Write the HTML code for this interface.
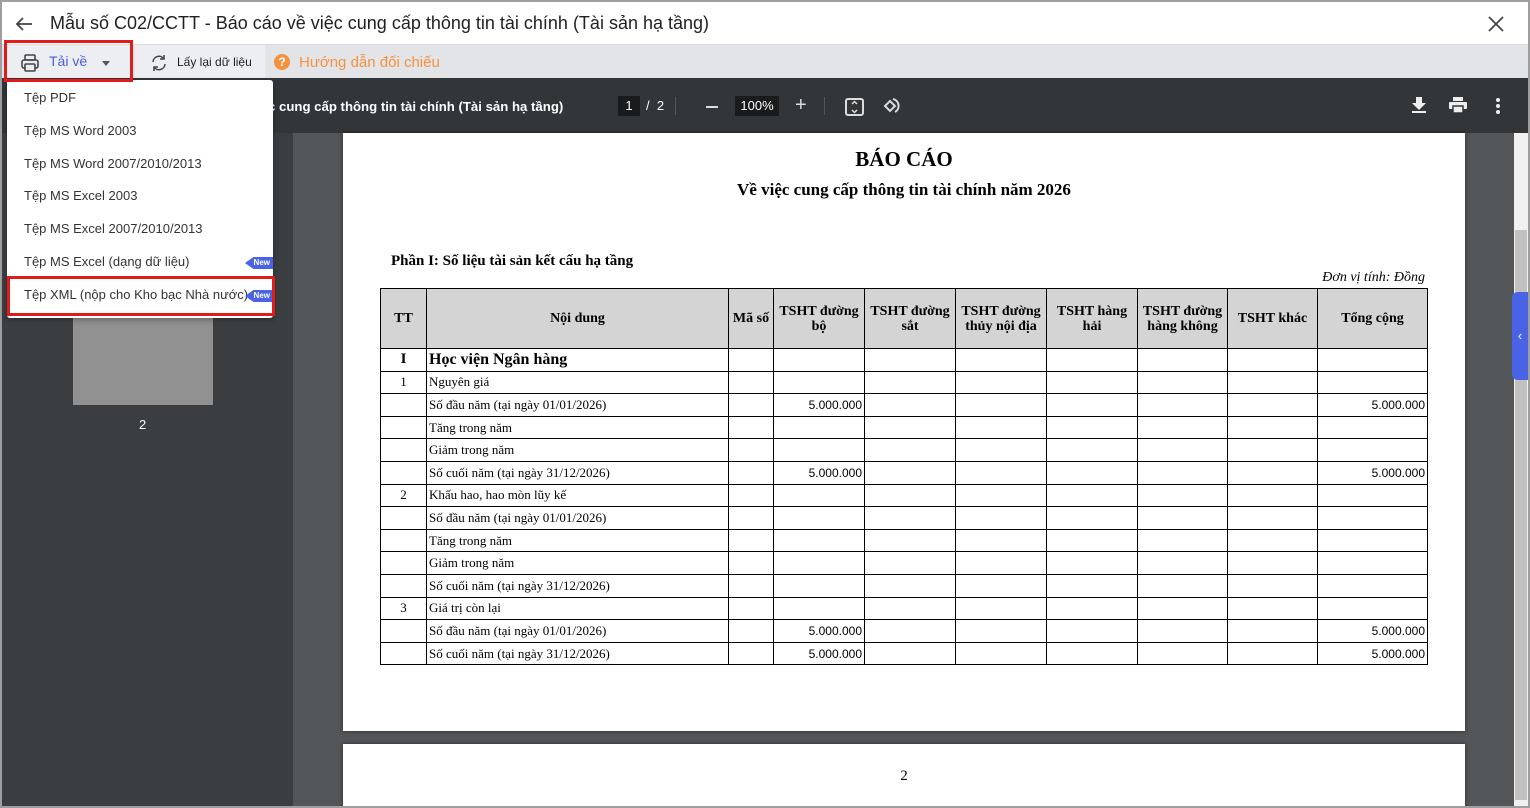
<!DOCTYPE html>
<html><head><meta charset="utf-8">
<style>
*{box-sizing:border-box;margin:0;padding:0}
body{width:1530px;height:808px;overflow:hidden;background:#9e9e9e;font-family:"Liberation Sans",sans-serif;position:relative}
.win{position:absolute;left:2px;top:2px;width:1526px;height:804px;background:#fff;overflow:hidden}
.title{position:absolute;left:0;top:0;width:100%;height:43px;background:#fff;border-bottom:1px solid #ddd}
.title .t{position:absolute;left:48px;top:11px;font-size:18px;color:#212121}
.tb{position:absolute;left:0;top:43px;width:100%;height:34px;background:#e2e4e8}
.btn{position:absolute;top:0;height:34px;background:#eceef1}
.vt{position:absolute;left:0;top:76px;width:100%;height:55px;background:#323639}
.vb{position:absolute;left:0;top:131px;width:1512px;height:673px;background:#525659}
.side{position:absolute;left:0;top:131px;width:291px;height:673px;background:#3b3e41}
.page{position:absolute;left:341px;width:1122px;background:#fff;box-shadow:0 0 4px rgba(0,0,0,.5)}
.menu{position:absolute;left:5px;top:78px;width:266px;height:238px;background:#fff;border-radius:3px;box-shadow:0 2px 6px rgba(0,0,0,.3)}
.menu div{position:absolute;left:17px;font-size:13px;color:#333}
.new{position:absolute;right:0;width:28px;height:12px;background:#4a63e6;color:#fff;font-size:8px;font-weight:bold;line-height:12px;text-align:right;padding-right:3px;clip-path:polygon(0 50%,30% 0,100% 0,100% 100%,30% 100%)}
table{position:absolute;left:37px;top:155px;border-collapse:collapse;font-family:"Liberation Serif",serif;font-size:13px}
td,th{border:1px solid #000;height:22.6px;padding:0 2px}
th{background:#d4d4d4;height:60px;font-weight:bold;font-size:14px;line-height:15px}
td.r{text-align:right;font-family:"Liberation Sans",sans-serif;font-size:12px}
td.c{text-align:center}
</style></head><body>
<div class="win">
<div class="title">
<svg style="position:absolute;left:13px;top:13px" width="18" height="18" viewBox="0 0 18 18"><path d="M17 9H2M8 3L2 9l6 6" stroke="#444" stroke-width="1.8" fill="none"/></svg>
<div class="t">Mẫu số C02/CCTT - Báo cáo về việc cung cấp thông tin tài chính (Tài sản hạ tầng)</div>
<svg style="position:absolute;left:1486px;top:14px" width="16" height="16" viewBox="0 0 16 16"><path d="M1 1l14 14M15 1L1 15" stroke="#444" stroke-width="1.8"/></svg>
</div>
<div class="tb">
<div class="btn" style="left:2px;width:128px"></div>
<div class="btn" style="left:133px;width:130px"></div>
<svg style="position:absolute;left:18px;top:8px" width="20" height="20" viewBox="0 0 20 20" fill="none" stroke="#444" stroke-width="1.6"><rect x="5" y="2" width="10" height="5" rx="1"/><rect x="2" y="7" width="16" height="8" rx="2"/><rect x="5" y="11" width="10" height="7" rx="1" fill="#eceef1"/></svg>
<div style="position:absolute;left:47px;top:8px;font-size:14px;color:#4a5de0">Tải về</div>
<div style="position:absolute;left:100px;top:16px;border:4px solid transparent;border-top:5px solid #555"></div>
<svg style="position:absolute;left:148px;top:9px" width="18" height="18" viewBox="0 0 18 18" fill="none" stroke="#444" stroke-width="1.5"><path d="M3 8a6 6 0 0 1 11-3M15 10a6 6 0 0 1-11 3"/><path d="M14 1v4h-4M4 17v-4h4"/></svg>
<div style="position:absolute;left:175px;top:10px;font-size:12px;color:#222">Lấy lại dữ liệu</div>
<div style="position:absolute;left:272px;top:9px;width:16px;height:16px;border-radius:50%;background:#f5923e;color:#fff;font-size:12px;font-weight:bold;text-align:center;line-height:16px">?</div>
<div style="position:absolute;left:297px;top:9px;font-size:15px;color:#f5923e">Hướng dẫn đối chiếu</div>
</div>
<div style="position:absolute;left:2px;top:38px;width:129px;height:42px;border:3px solid #e01b1b;z-index:5"></div>
<div class="vt">
<div style="position:absolute;left:255px;top:21px;color:#fff;font-size:13.2px;font-weight:bold">iệc cung cấp thông tin tài chính (Tài sản hạ tầng)</div>
<div style="position:absolute;left:616px;top:18px;width:22px;height:20px;background:#191b1c;color:#fff;font-size:13px;text-align:center;line-height:20px">1</div>
<div style="position:absolute;left:644px;top:20px;color:#fff;font-size:13px">/&nbsp; 2</div>
<div style="position:absolute;left:673px;top:19px;width:1px;height:18px;background:#555"></div>
<div style="position:absolute;left:704px;top:28px;width:12px;height:2px;background:#ddd"></div>
<div style="position:absolute;left:733px;top:18px;width:44px;height:20px;background:#191b1c;color:#fff;font-size:13px;text-align:center;line-height:20px">100%</div>
<div style="position:absolute;left:793px;top:16px;color:#ddd;font-size:20px">+</div>
<div style="position:absolute;left:822px;top:19px;width:1px;height:18px;background:#555"></div>
<svg style="position:absolute;left:843px;top:20px" width="19" height="18" viewBox="0 0 19 18" fill="none" stroke="#ddd" stroke-width="2"><rect x="1" y="1" width="17" height="16" rx="2"/><path d="M7 6l2.5-2.5L12 6M7 12l2.5 2.5L12 12" stroke-width="1.5"/></svg>
<svg style="position:absolute;left:879px;top:18px" width="20" height="20" viewBox="0 0 20 20" fill="none" stroke="#ddd" stroke-width="2"><path d="M4 10l5-5 5 5-5 5z"/><path d="M12 3a7 7 0 0 1 2 13"/></svg>
<svg style="position:absolute;left:1409px;top:18px" width="16" height="18" viewBox="0 0 16 18" fill="#eee"><path d="M5 1h6v6h4l-7 7-7-7h4z"/><rect x="1" y="15" width="14" height="2"/></svg>
<svg style="position:absolute;left:1447px;top:19px" width="18" height="16" viewBox="0 0 18 16" fill="#eee"><rect x="4" y="0" width="10" height="4"/><rect x="0" y="5" width="18" height="7" rx="1"/><rect x="4" y="9" width="10" height="7" fill="#eee" stroke="#323639" stroke-width="1.5"/></svg>
<div style="position:absolute;left:1494px;top:20px;width:4px;height:4px;background:#eee;border-radius:50%;box-shadow:0 6px #eee,0 12px #eee"></div>
</div>
<div class="vb"></div>
<div class="side">
<div style="position:absolute;left:71px;top:180px;width:140px;height:92px;background:#919191"></div>
<div style="position:absolute;left:137px;top:284px;color:#fff;font-size:13px">2</div>
</div>
<div class="page" style="top:131px;height:598px">
<div style="position:absolute;left:0;width:100%;top:14px;text-align:center;font-family:'Liberation Serif',serif;font-weight:bold;font-size:21px">BÁO CÁO</div>
<div style="position:absolute;left:0;width:100%;top:47px;text-align:center;font-family:'Liberation Serif',serif;font-weight:bold;font-size:17px">Về việc cung cấp thông tin tài chính năm 2026</div>
<div style="position:absolute;left:48px;top:120px;font-family:'Liberation Serif',serif;font-weight:bold;font-size:15px">Phần I: Số liệu tài sản kết cấu hạ tầng</div>
<div style="position:absolute;right:40px;top:137px;font-family:'Liberation Serif',serif;font-style:italic;font-size:14px">Đơn vị tính: Đồng</div>
<table>
<tr><th style="width:46px">TT</th><th style="width:302px">Nội dung</th><th style="width:45px">Mã số</th><th style="width:91px">TSHT đường bộ</th><th style="width:91px">TSHT đường sắt</th><th style="width:91px">TSHT đường thủy nội địa</th><th style="width:91px">TSHT hàng hải</th><th style="width:90px">TSHT đường hàng không</th><th style="width:90px">TSHT khác</th><th style="width:110px">Tổng cộng</th></tr>
<tr><td class="c" style="font-weight:bold;font-size:15px">I</td><td style="font-weight:bold;font-size:16px">Học viện Ngân hàng</td><td></td><td></td><td></td><td></td><td></td><td></td><td></td><td></td></tr>
<tr><td class="c">1</td><td>Nguyên giá</td><td></td><td></td><td></td><td></td><td></td><td></td><td></td><td></td></tr>
<tr><td></td><td>Số đầu năm (tại ngày 01/01/2026)</td><td></td><td class="r">5.000.000</td><td></td><td></td><td></td><td></td><td></td><td class="r">5.000.000</td></tr>
<tr><td></td><td>Tăng trong năm</td><td></td><td></td><td></td><td></td><td></td><td></td><td></td><td></td></tr>
<tr><td></td><td>Giảm trong năm</td><td></td><td></td><td></td><td></td><td></td><td></td><td></td><td></td></tr>
<tr><td></td><td>Số cuối năm (tại ngày 31/12/2026)</td><td></td><td class="r">5.000.000</td><td></td><td></td><td></td><td></td><td></td><td class="r">5.000.000</td></tr>
<tr><td class="c">2</td><td>Khấu hao, hao mòn lũy kế</td><td></td><td></td><td></td><td></td><td></td><td></td><td></td><td></td></tr>
<tr><td></td><td>Số đầu năm (tại ngày 01/01/2026)</td><td></td><td></td><td></td><td></td><td></td><td></td><td></td><td></td></tr>
<tr><td></td><td>Tăng trong năm</td><td></td><td></td><td></td><td></td><td></td><td></td><td></td><td></td></tr>
<tr><td></td><td>Giảm trong năm</td><td></td><td></td><td></td><td></td><td></td><td></td><td></td><td></td></tr>
<tr><td></td><td>Số cuối năm (tại ngày 31/12/2026)</td><td></td><td></td><td></td><td></td><td></td><td></td><td></td><td></td></tr>
<tr><td class="c">3</td><td>Giá trị còn lại</td><td></td><td></td><td></td><td></td><td></td><td></td><td></td><td></td></tr>
<tr><td></td><td>Số đầu năm (tại ngày 01/01/2026)</td><td></td><td class="r">5.000.000</td><td></td><td></td><td></td><td></td><td></td><td class="r">5.000.000</td></tr>
<tr><td></td><td>Số cuối năm (tại ngày 31/12/2026)</td><td></td><td class="r">5.000.000</td><td></td><td></td><td></td><td></td><td></td><td class="r">5.000.000</td></tr>
</table>
</div>
<div class="page" style="top:742px;height:80px">
<div style="position:absolute;left:0;width:100%;top:24px;text-align:center;font-family:'Liberation Serif',serif;font-size:15px">2</div>
</div>
<div style="position:absolute;left:1512px;top:131px;width:14px;height:673px;background:#f1f1f1"></div>
<div style="position:absolute;left:1513px;top:228px;width:12px;height:570px;background:#c1c1c1"></div>
<div style="position:absolute;left:1510px;top:290px;width:16px;height:88px;background:#4a63e6;border-radius:6px 0 0 6px;color:#fff;font-size:13px;line-height:88px;text-align:center">‹</div>
<div class="menu">
<div style="top:10px">Tệp PDF</div>
<div style="top:43px">Tệp MS Word 2003</div>
<div style="top:76px">Tệp MS Word 2007/2010/2013</div>
<div style="top:108px">Tệp MS Excel 2003</div>
<div style="top:141px">Tệp MS Excel 2007/2010/2013</div>
<div style="top:174px">Tệp MS Excel (dạng dữ liệu)</div>
<span class="new" style="top:177px">New</span>
<div style="top:207px">Tệp XML (nộp cho Kho bạc Nhà nước)</div>
<span class="new" style="top:210px">New</span>
</div>
<div style="position:absolute;left:5px;top:274px;width:268px;height:40px;border:3px solid #e01b1b;z-index:5"></div>
</div>
</body></html>
